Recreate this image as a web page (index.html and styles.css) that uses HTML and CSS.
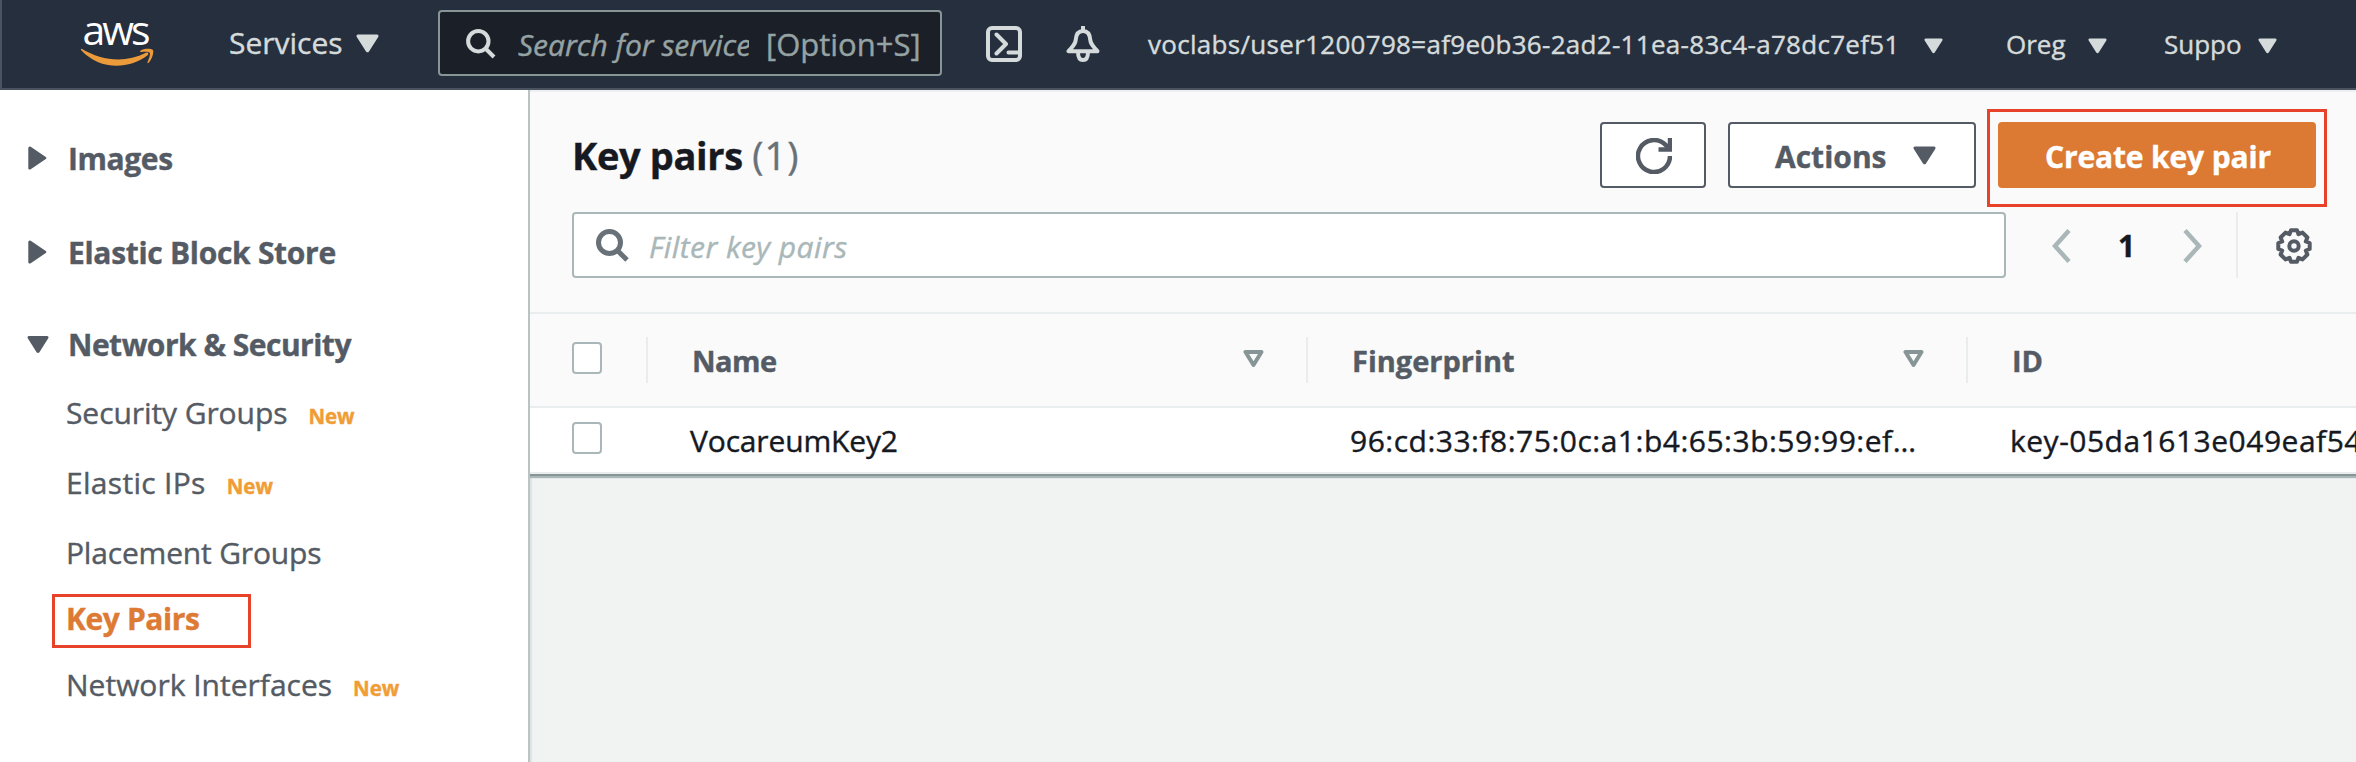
FILE: index.html
```html
<!DOCTYPE html>
<html lang="en">
<head>
<meta charset="utf-8">
<title>Key pairs | EC2 Management Console</title>
<link rel="stylesheet" href="styles.css">
</head>
<body>
<header class="topbar">
  <svg class="logo" viewBox="0 0 76 50" aria-label="aws">
    <text class="logo-text" x="2.5" y="25">aws</text>
    <path fill="#ec9b3b" d="M1.6 28.8C22 41 45 43.5 66 32.8C68.300 31.800 69.300 34 67.300 35.600C47 50.500 19 49.500 1.200 30.300C.7 29.500 1 28.700 1.600 28.800Z"/>
    <path fill="#ec9b3b" d="M60.500 30.800C64 28.200 71 28.500 73 30C74 32.500 72 39.500 68.500 43C67.600 43.400 67.200 43 67.600 42C69 38.500 70.500 34.500 69.800 33C68.800 31.500 64.500 31.800 61 32.100C60 32.200 59.700 31.400 60.500 30.800Z"/>
  </svg>
  <a class="services">Services <svg class="caret-lg" viewBox="0 0 23 19"><path d="M2 .5H21a1.500 1.500 0 0 1 1.200 2.400L13 17.500a2 2 0 0 1-3 0L.8 2.900A1.500 1.500 0 0 1 2 .5Z"/></svg></a>
  <div class="search">
    <svg class="search-icon" viewBox="0 0 32 32"><circle cx="13.300" cy="13.200" r="10.200"/><path d="M20.500 20.500L29 29"/></svg>
    <span class="search-placeholder">Search for services</span>
    <span class="search-hint">[Option+S]</span>
  </div>
  <svg class="shell" viewBox="0 0 36 36"><rect x="2" y="2" width="32" height="32" rx="4"/><path d="M10.500 8.500L20 18L10.500 27.500M22.500 26.500H33"/></svg>
  <svg class="bell" viewBox="0 0 34 36"><path d="M17 1V5M17 5C11.500 5 10 9.500 9.700 14C9.300 19 5.500 21.500 2.500 25.200H31.500C28.500 21.500 24.700 19 24.300 14C24 9.500 22.500 5 17 5ZM12 26C12 31 13.500 34 17 34C20.500 34 22 31 22 26"/></svg>
  <a class="menu account"><span>voclabs/user1200798=af9e0b36-2ad2-11ea-83c4-a78dc7ef51</span><svg class="caret" viewBox="0 0 23 19"><path d="M2 .5H21a1.500 1.500 0 0 1 1.200 2.400L13 17.500a2 2 0 0 1-3 0L.8 2.900A1.500 1.500 0 0 1 2 .5Z"/></svg></a>
  <a class="menu region"><span>Oreg</span><svg class="caret" viewBox="0 0 23 19"><path d="M2 .5H21a1.500 1.500 0 0 1 1.200 2.400L13 17.500a2 2 0 0 1-3 0L.8 2.900A1.500 1.500 0 0 1 2 .5Z"/></svg></a>
  <a class="menu support"><span>Suppo</span><svg class="caret" viewBox="0 0 23 19"><path d="M2 .5H21a1.500 1.500 0 0 1 1.200 2.400L13 17.500a2 2 0 0 1-3 0L.8 2.900A1.500 1.500 0 0 1 2 .5Z"/></svg></a>
</header>

<div class="layout">
  <nav class="sidebar">
    <div class="group images"><svg class="arrow" viewBox="0 0 19 24"><path d="M.3 2V22a1.500 1.500 0 0 0 2.400 1.300L17.800 13a1.300 1.300 0 0 0 0-2L2.700.8A1.500 1.500 0 0 0 .3 2Z"/></svg><span>Images</span></div>
    <div class="group ebs"><svg class="arrow" viewBox="0 0 19 24"><path d="M.3 2V22a1.500 1.500 0 0 0 2.400 1.300L17.800 13a1.300 1.300 0 0 0 0-2L2.700.8A1.500 1.500 0 0 0 .3 2Z"/></svg><span>Elastic Block Store</span></div>
    <div class="group network"><svg class="arrow-down" viewBox="0 0 23 19"><path d="M2 .5H21a1.500 1.500 0 0 1 1.200 2.400L13 17.500a2 2 0 0 1-3 0L.8 2.900A1.500 1.500 0 0 1 2 .5Z"/></svg><span>Network &amp; Security</span></div>
    <ul class="links">
      <li class="link">Security Groups<span class="badge">New</span></li>
      <li class="link wide">Elastic IPs<span class="badge">New</span></li>
      <li class="link placement">Placement Groups</li>
      <li class="link current">Key Pairs</li>
      <li class="link interfaces">Network Interfaces<span class="badge">New</span></li>
    </ul>
  </nav>

  <main class="content">
    <section class="panel">
      <div class="title-row">
        <h1 class="title">Key pairs <span class="count">(1)</span></h1>
        <button class="btn refresh" aria-label="Refresh"><svg viewBox="0 0 36 36"><path d="M34 18A16 16 0 1 1 29.300 6.700L34 11.300"/><path d="M34 0V11.500H22.500"/></svg></button>
        <button class="btn actions"><span>Actions</span><svg class="caret-lg" viewBox="0 0 23 19"><path d="M2 .5H21a1.500 1.500 0 0 1 1.200 2.400L13 17.500a2 2 0 0 1-3 0L.8 2.900A1.500 1.500 0 0 1 2 .5Z"/></svg></button>
        <div class="highlight"><button class="btn primary"><span>Create key pair</span></button></div>
      </div>
      <div class="filter-row">
        <div class="filter"><svg class="filter-icon" viewBox="0 0 34 34"><circle cx="13.500" cy="13.500" r="11"/><path d="M21.500 21.500L31 31"/></svg><span>Filter key pairs</span></div>
        <svg class="chevron" viewBox="0 0 19 34"><path d="M17 1.500L3 17L17 32.500"/></svg>
        <span class="page">1</span>
        <svg class="chevron" viewBox="0 0 19 34"><path d="M2 1.500L16 17L2 32.500"/></svg>
        <span class="divider"></span>
        <svg class="gear" viewBox="0 0 36 36"><path d="M15.000 2.300H21L22.500 6.200L26.500 4.600L31.400 9.500L29.800 13.500L33.700 15V21L29.800 22.500L31.400 26.500L26.500 31.400L22.500 29.800L21 33.700H15L13.500 29.800L9.500 31.400L4.600 26.500L6.200 22.500L2.300 21V15L6.200 13.500L4.600 9.500L9.500 4.600L13.500 6.200Z"/><circle cx="18" cy="18" r="4.700"/></svg>
      </div>
      <div class="row head">
        <span class="check"></span>
        <div class="cell name"><span>Name</span><svg class="sort" viewBox="0 0 21 18"><path d="M2.500 2H18.500L10.500 15Z"/></svg></div>
        <div class="cell"><span>Fingerprint</span><svg class="sort" viewBox="0 0 21 18"><path d="M2.500 2H18.500L10.500 15Z"/></svg></div>
        <div class="cell last"><span>ID</span></div>
      </div>
      <div class="row body">
        <span class="check"></span>
        <div class="value first">VocareumKey2</div>
        <div class="value finger">96:cd:33:f8:75:0c:a1:b4:65:3b:59:99:ef…</div>
        <div class="value id">key-05da1613e049eaf54</div>
      </div>
    </section>
  </main>
</div>
</body>
</html>
```
FILE: styles.css
```css
* { box-sizing: border-box; }
html, body { margin: 0; width: 2356px; height: 762px; overflow: hidden; }
body {
  display: flex;
  flex-direction: column;
  font: 30px/40px "Open Sans", "Noto Sans", sans-serif;
  -webkit-text-stroke: .4px currentColor;
  color: #16191f;
  background: #fff;
}
svg { display: block; flex: none; }

/* Top navigation */
.topbar {
  display: flex;
  align-items: center;
  flex: none;
  height: 90px;
  border-left: 2px solid #4b5361;
  border-bottom: 2px solid #4b5361;
  padding-left: 78px;
  background: #262f3e;
  color: #d5dbdb;
  white-space: nowrap;
}
.logo { width: 76px; height: 50px; margin: 2px 72px 0 0; overflow: visible; }
.logo-text { font: 41px "Open Sans", sans-serif; letter-spacing: -3px; fill: #fff; -webkit-text-stroke: .6px #fff; }
.services { display: flex; align-items: center; width: 210px; gap: 13px; padding: 0 0 2px 1px; }
.caret-lg { width: 23px; height: 19px; fill: currentColor; }
.search {
  display: flex;
  align-items: center;
  width: 504px;
  height: 66px;
  margin: 0 44px 2px 0;
  border: 2px solid #879596;
  border-radius: 4px;
  padding: 2px 0 0 25px;
  background: #1b1f28;
  color: #95a3a4;
}
.search-icon { width: 32px; height: 32px; margin-bottom: 1px; fill: none; stroke: #d5dbdb; stroke-width: 4; }
.search-placeholder { width: 231px; margin: 1px 17px 0 21px; overflow: hidden; font-style: italic; }
.search-hint { font-size: 31px; }
.shell { width: 36px; height: 36px; margin-right: 44px; fill: none; stroke: #d5dbdb; stroke-width: 4; stroke-linecap: round; stroke-linejoin: round; }
.bell { width: 34px; height: 36px; margin-right: 48px; fill: none; stroke: #d5dbdb; stroke-width: 4; stroke-linejoin: round; stroke-linecap: round; }
.menu { display: flex; align-items: center; font-size: 26px; }
.caret { width: 19px; height: 16px; margin-top: 4px; fill: currentColor; }
.account { width: 857px; letter-spacing: .3px; }
.account span { width: 776px; }
.region { width: 158px; }
.region span { width: 83px; padding-left: 1px; }
.support span { width: 95px; padding-left: 1px; }

/* Layout */
.layout { display: flex; flex: 1; min-height: 0; }
.sidebar { width: 528px; flex: none; padding-top: 38px; color: #545b64; }
.content {
  flex: 1;
  min-width: 0;
  border-left: 2px solid #bcc3c3;
  box-shadow: inset 2px 0 1px #dfe3e3;
  background: #f1f3f3;
}

/* Sidebar */
.group { display: flex; align-items: center; height: 60px; padding-left: 28px; font-weight: 700; }
.group span { padding: 2px 0 0 1px; }
.images { margin-bottom: 34px; letter-spacing: -.4px; }
.ebs { margin-bottom: 32px; letter-spacing: -.3px; }
.network { padding-left: 27px; letter-spacing: -.5px; }
.arrow { width: 19px; height: 24px; margin-right: 20px; fill: #545b64; }
.arrow-down { width: 22px; height: 19px; margin-right: 18px; fill: #545b64; }
.links { list-style: none; margin: 0; padding: 4px 0 0 66px; }
.link { display: flex; align-items: baseline; line-height: 70px; height: 70px; letter-spacing: -.08px; }
.badge { margin-left: 21px; font-size: 20.5px; font-weight: 700; color: #f09d36; }
.wide { letter-spacing: .3px; }
.wide .badge { letter-spacing: 0; }
.placement { height: 76px; letter-spacing: -.18px; }
.current {
  width: 199px;
  height: 54px;
  margin-left: -14px;
  border: 3px solid #e8432a;
  padding-left: 11px;
  line-height: 43px;
  font-weight: 700;
  letter-spacing: -.4px;
  color: #dd7a33;
}
.interfaces { margin-top: 2px; letter-spacing: 0; }

/* Panel */
.panel { border-top: 2px solid #eeeff0; background: #fafafa; box-shadow: 0 2px 1px #aab7b8; border-bottom: 2px solid #879596; }
.title-row { display: flex; height: 120px; padding: 30px 0 0 42px; }
.title { width: 1028px; margin: 0; font-size: 38px; line-height: 67px; letter-spacing: -.35px; }
.count { font-weight: 400; letter-spacing: 1px; color: #687078; }
.btn {
  display: flex;
  align-items: center;
  height: 66px;
  border: 2px solid #545b64;
  border-radius: 4px;
  padding: 0;
  background: #fff;
  color: #545b64;
  font: 700 30px/40px "Open Sans", sans-serif;
}
.btn span { padding-top: 3px; }
.refresh { width: 106px; padding-left: 34px; margin-right: 22px; }
.refresh svg { width: 36px; height: 36px; margin-top: 2px; fill: none; stroke: #545b64; stroke-width: 4.500; }
.actions { width: 248px; padding-left: 45px; gap: 26px; }
.highlight { height: 98px; width: 340px; margin: -13px 0 0 11px; border: 3px solid #e8432a; padding: 10px 8px; }
.primary { width: 318px; border-color: #dc7932; padding-left: 45px; background: #dc7932; color: #fff; letter-spacing: -.15px; }
.filter-row { display: flex; align-items: center; height: 66px; padding-left: 42px; }
.filter {
  display: flex;
  align-items: center;
  gap: 19px;
  width: 1434px;
  height: 66px;
  margin-right: 46px;
  border: 2px solid #aab7b8;
  border-radius: 4px;
  padding: 2px 0 0 22px;
  background: #fff;
  font-style: italic;
  letter-spacing: .42px;
  color: #aab7b8;
}
.filter span { padding-top: 1px; }
.filter-icon { width: 34px; height: 34px; fill: none; stroke: #687078; stroke-width: 5; }
.chevron { width: 19px; height: 34px; margin-top: 2px; fill: none; stroke: #aab7b8; stroke-width: 4.500; }
.page { width: 112px; padding: 2px 1px 0 0; text-align: center; font-weight: 700; }
.divider { width: 2px; height: 66px; margin: 0 38px 0 34px; background: #eaeded; }
.gear { width: 36px; height: 36px; margin-top: 2px; fill: none; stroke: #545b64; stroke-width: 4; stroke-linejoin: round; }

/* Table */
.row { display: flex; align-items: center; padding-left: 42px; border-bottom: 2px solid #eaeded; white-space: nowrap; }
.head { height: 96px; margin-top: 34px; border-top: 2px solid #eaeded; color: #545b64; font-size: 29px; font-weight: 700; }
.body { height: 66px; background: #fff; }
.check { flex: none; width: 30px; height: 32px; margin-top: -4px; border: 2px solid #aab7b8; border-radius: 4px; background: #fff; }
.head .check { margin: 0 44px 4px 0; }
.cell { display: flex; align-items: center; flex: none; width: 660px; height: 46px; border-left: 2px solid #eaeded; padding-left: 44px; }
.cell span { width: 551px; padding-top: 1px; }
.cell.name { letter-spacing: -.5px; }
.cell.last { width: 340px; }
.sort { width: 21px; height: 18px; margin-bottom: 2px; fill: none; stroke: #879596; stroke-width: 4; stroke-linejoin: round; }
.value { flex: none; width: 660px; padding-top: 1px; }
.first { margin-left: 88px; letter-spacing: -.15px; }
.finger { letter-spacing: .5px; }
.id { width: 340px; letter-spacing: .5px; }
```
